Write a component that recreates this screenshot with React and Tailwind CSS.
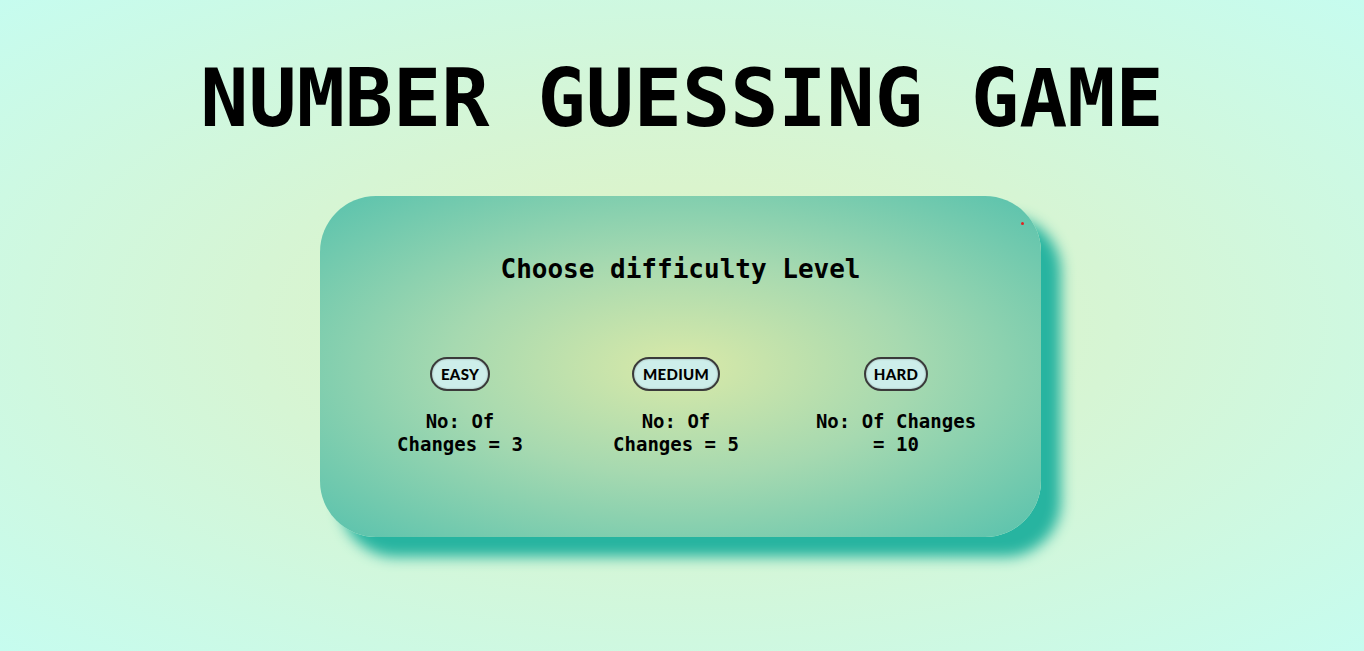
import React from 'react';

const levels = [
    { name: 'EASY', changes: 3, col: 'w-[130px]', btn: 'w-[60px]', gap: 'ml-0' },
    { name: 'MEDIUM', changes: 5, col: 'w-[130px]', btn: 'w-[88px]', gap: 'ml-[86px]' },
    { name: 'HARD', changes: 10, col: 'w-[170px]', btn: 'w-[64px]', gap: 'ml-[70px]' },
];

const App = () => {
    return (
        <div className="min-h-screen w-full overflow-hidden bg-[radial-gradient(ellipse_at_center,#e2f2bf_0%,#d6f5d4_45%,#c6fcef_100%)] font-['DejaVu_Sans_Mono',monospace] text-black">
            {/* Title */}
            <h1 className="pt-[59px] text-center text-[80px] font-bold leading-none">
                NUMBER GUESSING GAME
            </h1>

            {/* Difficulty card */}
            <div className="mt-[57px] flex justify-center">
                <div className="relative -ml-[3px] h-[341px] w-[721px] rounded-[56px] bg-[radial-gradient(ellipse_at_center,#d9e9a8_0%,#a6d9b0_45%,#58c2ad_100%)] pt-[60px] shadow-[20px_20px_14px_#27b4a0]">
                    <span className="absolute left-[701px] top-[26px] h-[3px] w-[3px] rounded-full bg-[#e22020]" />

                    <h2 className="text-center text-[26px] font-bold leading-none">
                        Choose difficulty Level
                    </h2>

                    <div className="mt-[75px] flex pl-[75px]">
                        {levels.map((lvl) => (
                            <div key={lvl.name} className={`${lvl.col} ${lvl.gap} flex flex-col items-center`}>
                                <button
                                    type="button"
                                    className={`${lvl.btn} flex h-[34px] items-center justify-center rounded-full border-2 border-[#3a3a3a] bg-[#cdeeea] font-['Comic_Sans_MS','Lato',sans-serif] text-[15px] font-black tracking-[0.3px] shadow-[inset_0_0_2px_rgba(0,0,0,0.35)]`}
                                >
                                    {lvl.name}
                                </button>
                                <p className="mt-[19px] text-center text-[19px] font-bold leading-[23px]">
                                    No: Of Changes = {lvl.changes}
                                </p>
                            </div>
                        ))}
                    </div>
                </div>
            </div>
        </div>
    );
};

export default App;
